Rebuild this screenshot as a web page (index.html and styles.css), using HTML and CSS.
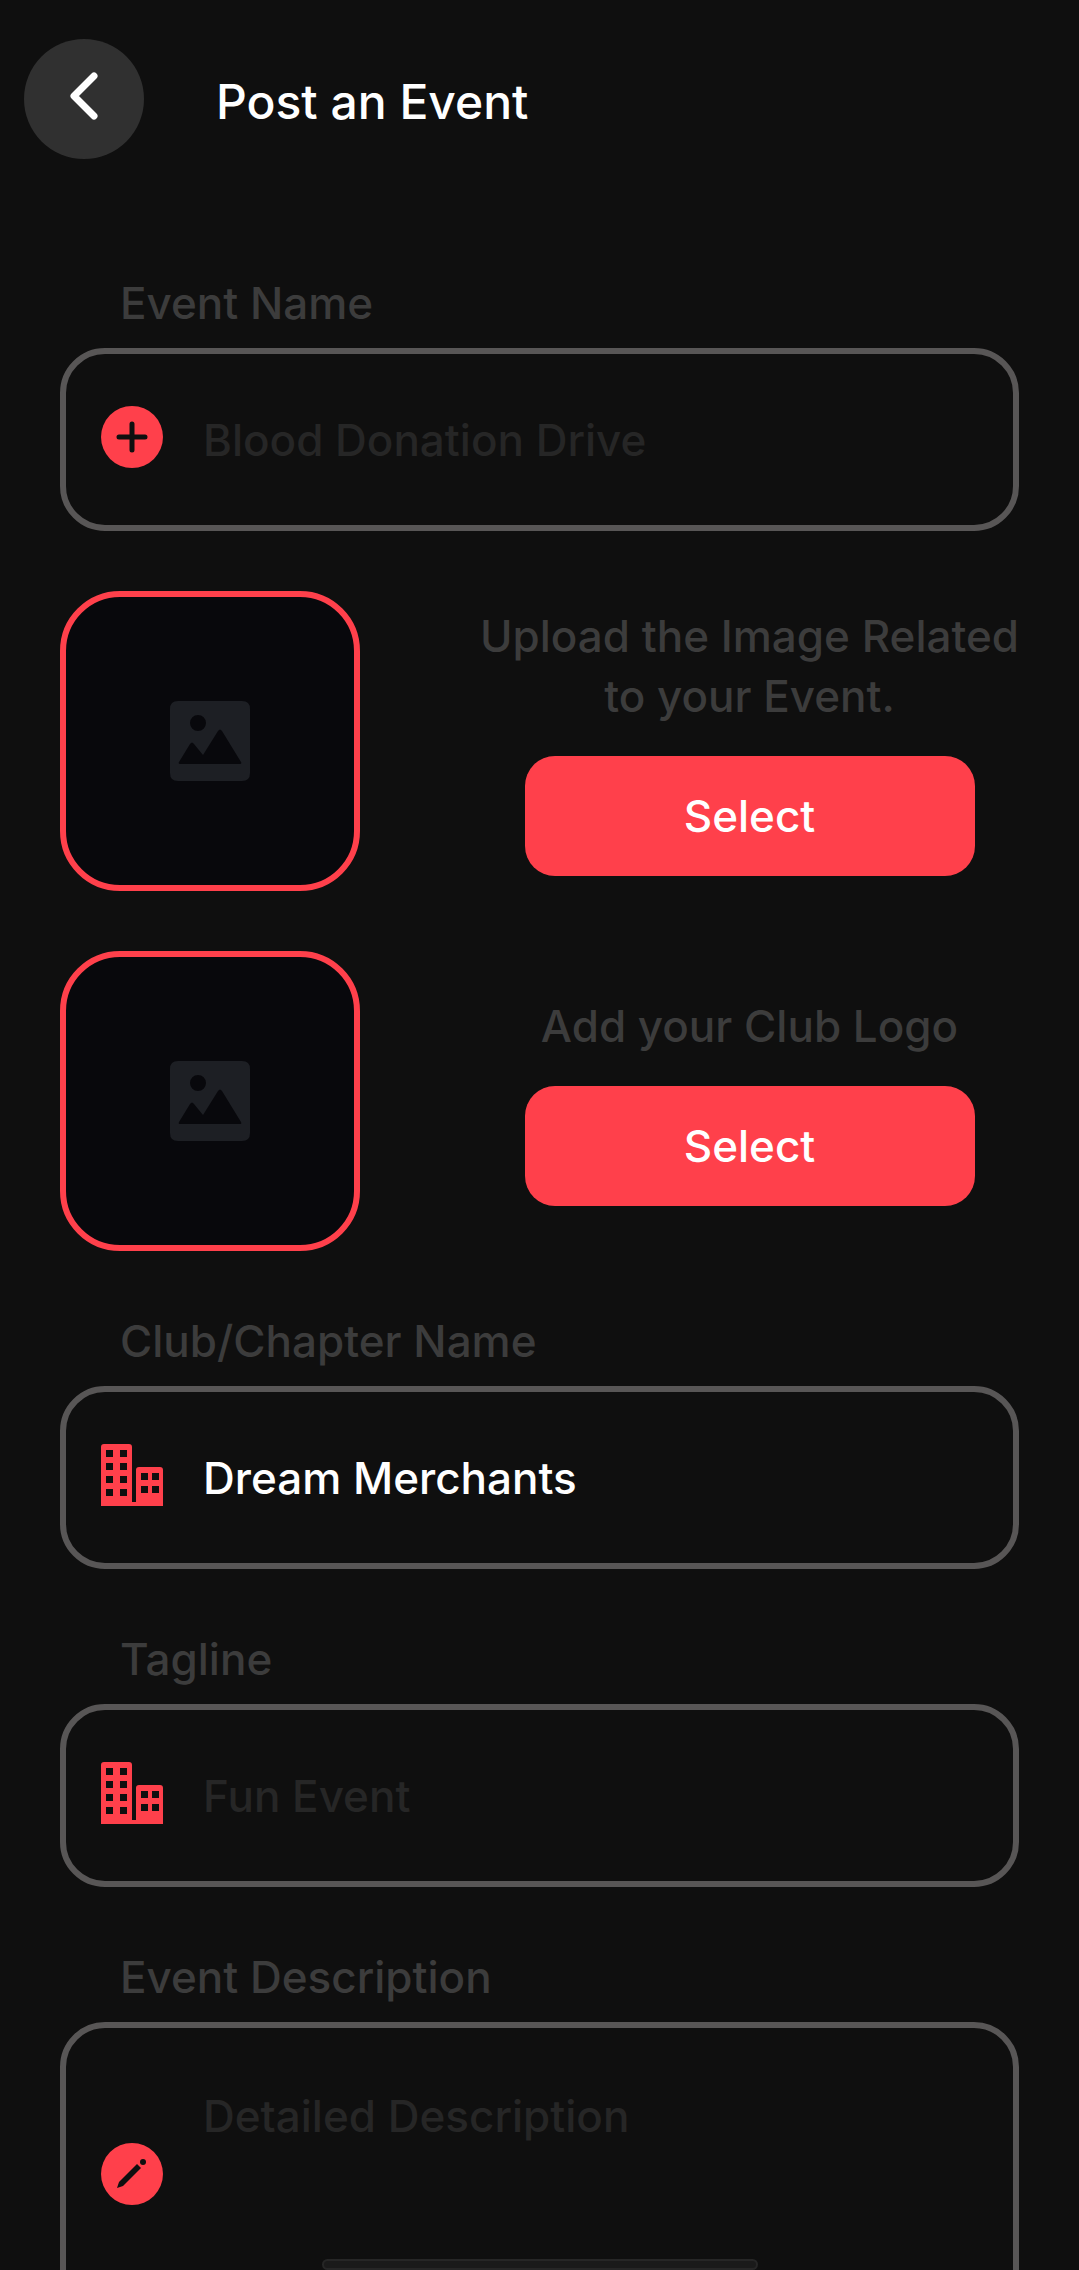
FILE: index.html
```html
<!DOCTYPE html>
<html lang="en">
<head>
<meta charset="utf-8">
<meta name="viewport" content="width=device-width, initial-scale=1">
<title>Post an Event</title>
<link rel="stylesheet" href="styles.css">
</head>
<body>
<svg class="sprite" aria-hidden="true">
  <symbol id="buildings" viewBox="0 0 62 62">
    <path fill-rule="evenodd" d="M0 62V3Q0 0 3 0H28Q31 0 31 3V58H35V26Q35 23 38 23H59Q62 23 62 26V62ZM5 6h7v7h-7zM19 6h7v7h-7zM5 19h7v7h-7zM19 19h7v7h-7zM5 32h7v7h-7zM19 32h7v7h-7zM5 45h7v7h-7zM19 45h7v7h-7zM40 29h7v7h-7zM51 29h7v7h-7zM40 42h7v7h-7zM51 42h7v7h-7z"/>
  </symbol>
  <symbol id="picture" viewBox="0 0 80 80">
    <path fill-rule="evenodd" d="M8 0H72Q80 0 80 8V72Q80 80 72 80H8Q0 80 0 72V8Q0 0 8 0ZM28 14a8 8 0 1 0 0 16a8 8 0 1 0 0-16ZM10 63H70Q72 63 71 61L52 30Q50 27 48 30L33 54L24 43Q22 40 20 43L9 61Q8 63 10 63Z"/>
  </symbol>
</svg>
<div class="screen">
  <header class="topbar">
    <button class="back" type="button" aria-label="Back">
      <svg class="back-icon" viewBox="0 0 30 48"><path d="M25 4L5 24L25 44"/></svg>
    </button>
    <h1 class="title">Post an Event</h1>
  </header>
  <form class="form">
    <div class="group">
      <label class="label" for="event-name">Event Name</label>
      <div class="field">
        <svg class="icon" viewBox="0 0 62 62" aria-hidden="true"><circle cx="31" cy="31" r="31"/><path class="cut" d="M31 18V44M18 31H44"/></svg>
        <input class="input" id="event-name" type="text" placeholder="Blood Donation Drive">
      </div>
    </div>
    <div class="upload">
      <div class="tile"><svg class="tile-icon" aria-hidden="true"><use href="#picture"/></svg></div>
      <div class="upload-side">
        <p class="upload-text">Upload the Image Related to your Event.</p>
        <button class="select" type="button">Select</button>
      </div>
    </div>
    <div class="upload">
      <div class="tile"><svg class="tile-icon" aria-hidden="true"><use href="#picture"/></svg></div>
      <div class="upload-side">
        <p class="upload-text">Add your Club Logo</p>
        <button class="select" type="button">Select</button>
      </div>
    </div>
    <div class="group">
      <label class="label" for="club-name">Club/Chapter Name</label>
      <div class="field">
        <svg class="icon" aria-hidden="true"><use href="#buildings"/></svg>
        <input class="input" id="club-name" type="text" value="Dream Merchants">
      </div>
    </div>
    <div class="group">
      <label class="label" for="tagline">Tagline</label>
      <div class="field">
        <svg class="icon" aria-hidden="true"><use href="#buildings"/></svg>
        <input class="input" id="tagline" type="text" placeholder="Fun Event">
      </div>
    </div>
    <div class="group">
      <label class="label" for="description">Event Description</label>
      <div class="field field-tall">
        <svg class="icon" viewBox="0 0 62 62" aria-hidden="true"><circle cx="31" cy="31" r="31"/><path class="ink" d="M16 45L18 39L36 21L40 25L22 43Z"/><circle class="ink" cx="42" cy="19" r="3"/></svg>
        <textarea class="input" id="description" rows="3" placeholder="Detailed Description"></textarea>
      </div>
    </div>
  </form>
</div>
<div class="home-bar"></div>
</body>
</html>
```

FILE: styles.css
```css
* { box-sizing: border-box; }

body {
  margin: 0;
  background: #0f0f0f;
  color: #fff;
  font: 500 44px/60px Inter, "Liberation Sans", sans-serif;
}

.sprite { display: none; }

.screen {
  display: flex;
  flex-direction: column;
  height: 100vh;
}

.topbar {
  display: flex;
  align-items: center;
  gap: 72px;
  padding: 39px 24px 0;
}

.back {
  display: flex;
  align-items: center;
  justify-content: center;
  width: 120px;
  height: 120px;
  padding: 0 0 6px;
  border: 0;
  border-radius: 50%;
  background: #303030;
}

.back-icon {
  width: 30px;
  height: 48px;
  fill: none;
  stroke: #fff;
  stroke-width: 7;
  stroke-linecap: round;
  stroke-linejoin: round;
}

.title {
  margin: 0;
  padding-top: 6px;
  font-size: 48px;
  font-weight: 500;
}

.form {
  display: flex;
  flex: 1;
  flex-direction: column;
  gap: 60px;
  min-height: 0;
  margin-top: 114px;
  padding: 0 60px 60px;
  overflow-y: auto;
  scrollbar-width: none;
}

.group {
  display: flex;
  flex: none;
  flex-direction: column;
  gap: 15px;
}

.label {
  padding-left: 60px;
  color: #3c3c3c;
}

.field {
  display: flex;
  align-items: center;
  gap: 40px;
  height: 183px;
  padding: 0 35px;
  border: 6px solid #585656;
  border-radius: 45px;
}

.field-tall { height: 308px; }

.icon {
  flex: none;
  width: 62px;
  height: 62px;
  margin-bottom: 5px;
  fill: #ff404b;
}

.cut {
  fill: none;
  stroke: #0f0f0f;
  stroke-width: 5;
  stroke-linecap: round;
}

.ink { fill: #0f0f0f; }

.input {
  flex: 1;
  min-width: 0;
  padding: 0;
  border: 0;
  outline: 0;
  background: none;
  color: #fff;
  font: inherit;
  resize: none;
}

.input::placeholder {
  color: #262626;
  opacity: 1;
}

.upload {
  display: flex;
  flex: none;
  align-items: center;
  gap: 120px;
}

.tile {
  display: flex;
  flex: none;
  align-items: center;
  justify-content: center;
  width: 300px;
  height: 300px;
  border: 6px solid #ff404b;
  border-radius: 60px;
  background: #08080c;
}

.tile-icon {
  width: 80px;
  height: 80px;
  fill: #1d1f24;
}

.upload-side {
  display: flex;
  flex: 1;
  flex-direction: column;
  align-items: center;
  gap: 30px;
}

.upload-text {
  margin: 0 -15px;
  color: #3c3c3c;
  text-align: center;
}

.select {
  width: 450px;
  max-width: 100%;
  height: 120px;
  padding: 0;
  border: 0;
  border-radius: 30px;
  background: #ff404b;
  color: #fff;
  font: inherit;
}

.home-bar {
  position: fixed;
  bottom: 0;
  left: 50%;
  width: 436px;
  height: 11px;
  margin-left: -218px;
  border: 2px solid #262626;
  border-radius: 6px;
  background: #1a1a1a;
}
```
